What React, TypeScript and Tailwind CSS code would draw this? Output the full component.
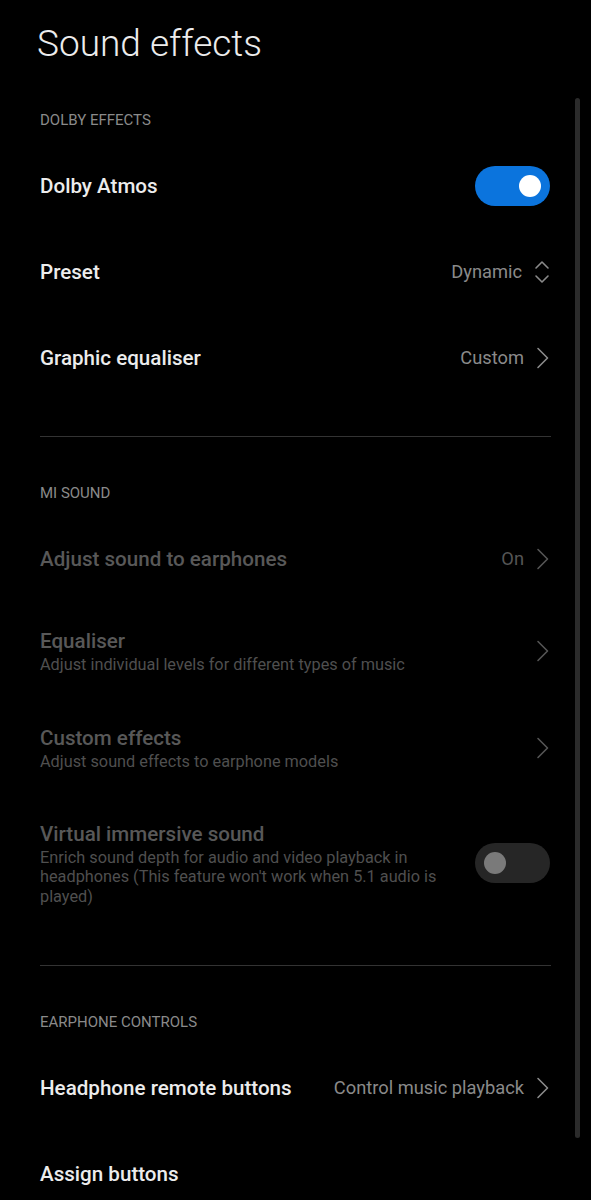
import type { ReactNode } from "react";

const Chevron = ({ dim = false }: { dim?: boolean }) => (
    <svg width="14" height="22" viewBox="0 0 14 22" className="shrink-0">
        <path
            d="M2 1.5 L11.5 11 L2 20.5"
            fill="none"
            stroke={dim ? "#555555" : "#8a8a8a"}
            strokeWidth="1.6"
            strokeLinecap="round"
            strokeLinejoin="round"
        />
    </svg>
);

const UpDown = () => (
    <svg width="16" height="26" viewBox="0 0 16 26" className="shrink-0">
        <path
            d="M2 9 L8 3 L14 9 M2 17 L8 23 L14 17"
            fill="none"
            stroke="#8a8a8a"
            strokeWidth="1.6"
            strokeLinecap="round"
            strokeLinejoin="round"
        />
    </svg>
);

const Toggle = ({ on }: { on: boolean }) => (
    <div
        className={`w-[75px] h-[40px] rounded-full flex items-center px-[8px] shrink-0 ${on ? "bg-[#0b74dd] justify-end" : "bg-[#262626] justify-start"
            }`}
    >
        <div className={`w-[22px] h-[22px] rounded-full ${on ? "bg-white mr-[1px]" : "bg-[#7a7a7a] ml-[1px]"}`} />
    </div>
);

const SectionLabel = ({ children }: { children: ReactNode }) => (
    <div className="pb-[13px] text-[15px] leading-[20px] text-[#8a8a8a]">{children}</div>
);

const Divider = () => <div className="mt-[35px] mb-[22px] h-px bg-[#333333]" />;

type RowProps = {
    title: string;
    sub?: string;
    value?: string;
    right?: ReactNode;
    disabled?: boolean;
    height: string;
};

const Row = ({ title, sub, value, right, disabled, height }: RowProps) => (
    <div className={`flex items-center gap-4 ${height}`}>
        <div className="flex-1 min-w-0">
            <div
                className={`text-[20.6px] leading-[28px] font-medium ${disabled ? "text-[#585858]" : "text-[#ececec]"}`}
            >
                {title}
            </div>
            {sub && <div className="text-[16.3px] leading-[19.5px] text-[#4f4f4f] pr-2">{sub}</div>}
        </div>
        <div className="flex items-center gap-[12px] -mr-[1px]">
            {value && (
                <span className={`text-[18.3px] ${disabled ? "text-[#555555]" : "text-[#8a8a8a]"}`}>{value}</span>
            )}
            {right}
        </div>
    </div>
);

export default function App() {
    return (
        <div
            className="relative w-[591px] h-[1200px] overflow-hidden bg-black"
            style={{ fontFamily: "Roboto, 'Noto Sans', sans-serif" }}
        >
            {/* scroll indicator */}
            <div className="absolute left-[575px] top-[98px] w-[5px] h-[1040px] rounded-full bg-[#2b2b2b]" />

            <div className="pl-[37px] h-[86px] flex items-center">
                <h1 className="text-[37px] font-light text-[#ececec] leading-none">Sound effects</h1>
            </div>

            <div className="pl-[40px] pr-[42px]">
                <div className="pt-[24px]">
                    <SectionLabel>DOLBY EFFECTS</SectionLabel>
                </div>
                <Row title="Dolby Atmos" height="h-[86px]" right={<Toggle on />} />
                <Row title="Preset" height="h-[86px]" value="Dynamic" right={<UpDown />} />
                <Row title="Graphic equaliser" height="h-[86px]" value="Custom" right={<Chevron />} />

                <div className="mr-[-2px]">
                    <Divider />
                </div>
                <div className="pt-[24px]">
                    <SectionLabel>MI SOUND</SectionLabel>
                </div>
                <Row title="Adjust sound to earphones" height="h-[86px]" value="On" right={<Chevron dim />} disabled />
                <Row
                    title="Equaliser"
                    sub="Adjust individual levels for different types of music"
                    height="h-[97px]"
                    right={<Chevron dim />}
                    disabled
                />
                <Row
                    title="Custom effects"
                    sub="Adjust sound effects to earphone models"
                    height="h-[97px]"
                    right={<Chevron dim />}
                    disabled
                />
                <Row
                    title="Virtual immersive sound"
                    sub="Enrich sound depth for audio and video playback in headphones (This feature won't work when 5.1 audio is played)"
                    height="h-[134px]"
                    right={<Toggle on={false} />}
                    disabled
                />

                <div className="mr-[-2px]">
                    <Divider />
                </div>
                <div className="pt-[24px]">
                    <SectionLabel>EARPHONE CONTROLS</SectionLabel>
                </div>
                <Row
                    title="Headphone remote buttons"
                    height="h-[86px]"
                    value="Control music playback"
                    right={<Chevron />}
                />
                <Row title="Assign buttons" height="h-[86px]" />
            </div>
        </div>
    );
}
